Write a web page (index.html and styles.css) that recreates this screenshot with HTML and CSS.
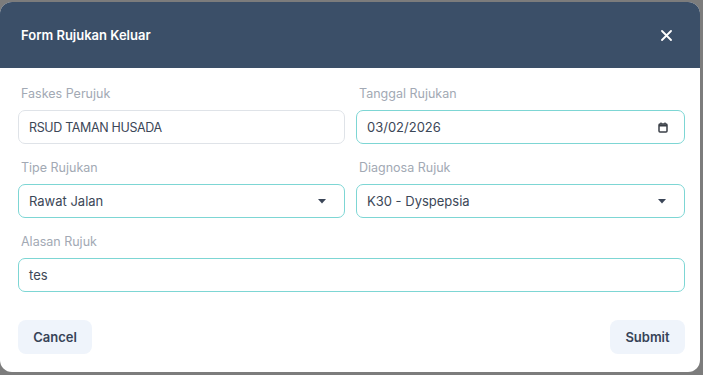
FILE: index.html
```html
<!DOCTYPE html>
<html lang="id">
<head>
<meta charset="utf-8">
<title>Form Rujukan Keluar</title>
<link rel="stylesheet" href="styles.css">
</head>
<body>
<div class="modal">
  <div class="header">
    <h1 class="title">Form Rujukan Keluar</h1>
    <svg class="close" width="11" height="11" viewBox="0 0 11 11"><path d="M1 1L10 10M10 1L1 10" stroke="#fff" stroke-width="1.8" stroke-linecap="round"/></svg>
  </div>
  <div class="body">
    <div class="grid">
      <div class="field">
        <div class="label">Faskes Perujuk</div>
        <div class="input plain"><span class="caps">RSUD TAMAN HUSADA</span></div>
      </div>
      <div class="field">
        <div class="label">Tanggal Rujukan</div>
        <div class="input focus">
          <span>03/02/2026</span>
          <svg width="10" height="11" viewBox="0 0 10 11"><rect x="1" y="2" width="8" height="8" rx="1" fill="none" stroke="#3a3f47" stroke-width="1.5"/><path d="M1 3.5H9" stroke="#3a3f47" stroke-width="2"/><path d="M3 0.5V2M7 0.5V2" stroke="#3a3f47" stroke-width="1.3"/></svg>
        </div>
      </div>
      <div class="field">
        <div class="label">Tipe Rujukan</div>
        <div class="input focus select">
          <span>Rawat Jalan</span>
          <svg width="8" height="5" viewBox="0 0 8 5"><path d="M0 0H8L4 4.5Z" fill="#3b4658"/></svg>
        </div>
      </div>
      <div class="field">
        <div class="label">Diagnosa Rujuk</div>
        <div class="input focus select">
          <span>K30 - Dyspepsia</span>
          <svg width="8" height="5" viewBox="0 0 8 5"><path d="M0 0H8L4 4.5Z" fill="#3b4658"/></svg>
        </div>
      </div>
      <div class="field wide">
        <div class="label">Alasan Rujuk</div>
        <div class="input focus">tes</div>
      </div>
    </div>
    <div class="actions">
      <button class="btn cancel">Cancel</button>
      <button class="btn submit">Submit</button>
    </div>
  </div>
</div>
</body>
</html>
```
FILE: styles.css
```css
* { box-sizing: border-box; }
html, body { margin: 0; padding: 0; }
body {
  background: #7c7c7c;
  width: 703px;
  height: 375px;
  overflow: hidden;
  font-family: "Inter", "Noto Sans", sans-serif;
}
.modal {
  margin-top: 2px;
  width: 700px;
  height: 370px;
  background: #fff;
  border-radius: 12px;
  overflow: hidden;
  display: flex;
  flex-direction: column;
}
.header {
  height: 66px;
  flex: none;
  background: #3b4f68;
  display: flex;
  align-items: center;
  justify-content: space-between;
  padding: 0 28px 0 21px;
}
.title {
  margin: 0;
  color: #fff;
  font-size: 13px;
  font-weight: 600;
}
.body {
  flex: 1;
  padding: 16px 15px 18px 18px;
  display: flex;
  flex-direction: column;
  justify-content: space-between;
}
.grid {
  display: grid;
  grid-template-columns: 327px 329px;
  column-gap: 11px;
  row-gap: 14px;
}
.field.wide { grid-column: 1 / 3; }
.label {
  height: 20px;
  line-height: 20px;
  margin: 0 0 6px 3px;
  font-size: 12.5px;
  color: #a2a9b4;
}
.input {
  height: 34px;
  border-radius: 7px;
  border: 1px solid #7dd6d4;
  padding: 0 16px 0 10px;
  display: flex;
  align-items: center;
  justify-content: space-between;
  font-size: 13px;
  color: #3c4757;
}
.caps { font-size: 12.5px; letter-spacing: -0.35px; }
.input.plain { border-color: #dfe3e8; }
.select { padding-right: 18px; }
.actions {
  display: flex;
  justify-content: space-between;
}
.btn {
  height: 34px;
  border: none;
  border-radius: 8px;
  background: #eff4fb;
  color: #374357;
  font-family: inherit;
  font-size: 13px;
  font-weight: 600;
  padding: 0;
}
.cancel { width: 74px; }
.submit { width: 75px; }
```
